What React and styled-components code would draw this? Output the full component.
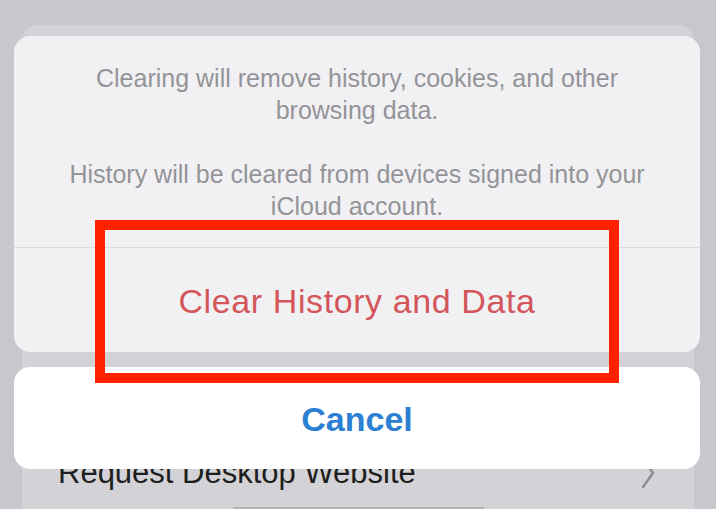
import React from 'react';
import styled, { createGlobalStyle } from 'styled-components';

const GlobalStyle = createGlobalStyle`
	html, body {
		margin: 0;
		padding: 0;
		background: #c7c8cd;
	}
	body {
		font-family: 'Liberation Sans', Arial, sans-serif;
	}
`;

const Screen = styled.div`
	position: relative;
	overflow: hidden;
	width: 716px;
	height: 509px;
	background: #c7c8cd;
`;

// dimmed page that sits behind the action sheet
const Backdrop = styled.div`
	display: flex;
	flex-direction: column;
	box-sizing: border-box;
	height: 100%;
	padding: 25px 22px 0;
`;

const Card = styled.div`
	display: flex;
	flex: 1;
	flex-direction: column;
	justify-content: flex-end;
	align-items: center;
	border-radius: 16px 16px 0 0;
	background: #d3d3d7;
`;

const Row = styled.div`
	display: flex;
	align-items: center;
	justify-content: space-between;
	align-self: stretch;
	height: 34px;
	padding: 0 40px 0 36px;
	color: #1e1e20;
	font-size: 31px;
	line-height: 34px;
`;

const Handle = styled.div`
	width: 251px;
	height: 2px;
	margin-top: 17px;
	background: #b3b3b7;
`;

const Sheet = styled.div`
	position: absolute;
	top: 36px;
	left: 14px;
	display: flex;
	flex-direction: column;
	gap: 15px;
	width: 686px;
`;

const Group = styled.div`
	overflow: hidden;
	border-radius: 16px;
	background: ${(p) => (p.$light ? '#ffffff' : '#f1f1f3')};
`;

const Message = styled.div`
	display: flex;
	flex-direction: column;
	gap: 32px;
	padding: 26px 40px 25px;
	border-bottom: 1px solid #dcdcdf;
	color: #949498;
	font-size: 25px;
	line-height: 32px;
	text-align: center;

	p {
		margin: 0;
	}
`;

const Action = styled.div`
	display: flex;
	align-items: center;
	justify-content: center;
	box-sizing: border-box;
	height: ${(p) => p.$h}px;
	padding-top: 2px;
	color: ${(p) => p.$color};
	font-size: 34px;
	font-weight: ${(p) => (p.$bold ? 700 : 400)};
	letter-spacing: ${(p) => (p.$bold ? 0 : 0.6)}px;
`;

const Highlight = styled.div`
	position: absolute;
	top: 220px;
	left: 95px;
	box-sizing: border-box;
	width: 524px;
	height: 163px;
	border: 10px solid #ff2200;
`;

const Chevron = () => (
	<svg width="12" height="34" viewBox="0 0 12 34">
		<polyline points="1,3 11,17 1,31" fill="none" stroke="#8e8e92" strokeWidth="2.5" strokeLinecap="round" />
	</svg>
);

const App = () => {
	return (
		<>
			<GlobalStyle />
			<Screen>
				<Backdrop>
					<Card>
						<Row>
							<span>Request Desktop Website</span>
							<Chevron />
						</Row>
						<Handle />
					</Card>
				</Backdrop>
				<Sheet>
					<Group>
						<Message>
							<p>Clearing will remove history, cookies, and other browsing data.</p>
							<p>History will be cleared from devices signed into your iCloud account.</p>
						</Message>
						<Action $h={104} $color="#d4565b">
							Clear History and Data
						</Action>
					</Group>
					<Group $light>
						<Action $h={102} $color="#2b80d3" $bold>
							Cancel
						</Action>
					</Group>
				</Sheet>
				<Highlight />
			</Screen>
		</>
	);
};

export default App;
